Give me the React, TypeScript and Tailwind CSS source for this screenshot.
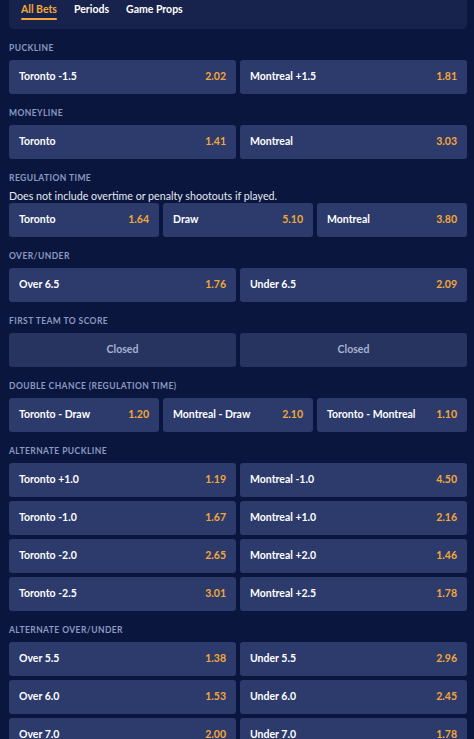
import React from 'react';

type Outcome = { name: string; odds?: string };

type Market = {
  title: string;
  note?: string;
  cols: 2 | 3;
  closed?: boolean;
  rows: Outcome[][];
};

const markets: Market[] = [
  { title: 'Puckline', cols: 2, rows: [[{ name: 'Toronto -1.5', odds: '2.02' }, { name: 'Montreal +1.5', odds: '1.81' }]] },
  { title: 'Moneyline', cols: 2, rows: [[{ name: 'Toronto', odds: '1.41' }, { name: 'Montreal', odds: '3.03' }]] },
  {
    title: 'Regulation Time',
    note: 'Does not include overtime or penalty shootouts if played.',
    cols: 3,
    rows: [[{ name: 'Toronto', odds: '1.64' }, { name: 'Draw', odds: '5.10' }, { name: 'Montreal', odds: '3.80' }]],
  },
  { title: 'Over/Under', cols: 2, rows: [[{ name: 'Over 6.5', odds: '1.76' }, { name: 'Under 6.5', odds: '2.09' }]] },
  { title: 'First Team To Score', cols: 2, closed: true, rows: [[{ name: 'Closed' }, { name: 'Closed' }]] },
  {
    title: 'Double Chance (Regulation Time)',
    cols: 3,
    rows: [[{ name: 'Toronto - Draw', odds: '1.20' }, { name: 'Montreal - Draw', odds: '2.10' }, { name: 'Toronto - Montreal', odds: '1.10' }]],
  },
  {
    title: 'Alternate Puckline',
    cols: 2,
    rows: [
      [{ name: 'Toronto +1.0', odds: '1.19' }, { name: 'Montreal -1.0', odds: '4.50' }],
      [{ name: 'Toronto -1.0', odds: '1.67' }, { name: 'Montreal +1.0', odds: '2.16' }],
      [{ name: 'Toronto -2.0', odds: '2.65' }, { name: 'Montreal +2.0', odds: '1.46' }],
      [{ name: 'Toronto -2.5', odds: '3.01' }, { name: 'Montreal +2.5', odds: '1.78' }],
    ],
  },
  {
    title: 'Alternate Over/Under',
    cols: 2,
    rows: [
      [{ name: 'Over 5.5', odds: '1.38' }, { name: 'Under 5.5', odds: '2.96' }],
      [{ name: 'Over 6.0', odds: '1.53' }, { name: 'Under 6.0', odds: '2.45' }],
      [{ name: 'Over 7.0', odds: '2.00' }, { name: 'Under 7.0', odds: '1.78' }],
    ],
  },
];

function OddsButton({ o, closed }: { o: Outcome; closed?: boolean }) {
  if (closed) {
    return (
      <div className="h-[34px] rounded-[3px] bg-[#26345f] flex items-center justify-center text-[10.5px] font-bold text-[#a7b2d2]">
        {o.name}
      </div>
    );
  }
  return (
    <button className="h-[34px] rounded-[3px] bg-[#2c3b6b] flex items-center justify-between px-[10px] text-[10.5px] font-bold">
      <span className="text-white">{o.name}</span>
      <span className="text-[#f4a738]">{o.odds}</span>
    </button>
  );
}

function MarketBlock({ m }: { m: Market }) {
  return (
    <section className="pt-[13px]">
      <h3 className="h-[12px] leading-[12px] mb-[6px] text-[8.5px] font-bold uppercase tracking-[0.05em] text-[#8a9ac3]">
        {m.title}
      </h3>
      {m.note && <p className="-mt-[1px] text-[10.7px] leading-[14px] text-[#e3e7f2]">{m.note}</p>}
      <div className="flex flex-col gap-[4px]">
        {m.rows.map((row, i) => (
          <div key={i} className={m.cols === 3 ? 'grid grid-cols-3 gap-[4px]' : 'grid grid-cols-2 gap-[4px]'}>
            {row.map((o, j) => (
              <OddsButton key={j} o={o} closed={m.closed} />
            ))}
          </div>
        ))}
      </div>
    </section>
  );
}

export default function App() {
  const tabs = ['All Bets', 'Periods', 'Game Props'];
  return (
    <div className="min-h-screen bg-[#0a163d] pl-[9px] pr-[7px] pb-6" style={{ fontFamily: 'Lato, "Open Sans", sans-serif' }}>
      <nav className="h-[29px] rounded-b-[5px] bg-[#18234d] flex items-start gap-[17px] pl-[12px] pt-[3px]">
        {tabs.map((t, i) => (
          <div key={t} className="flex flex-col items-stretch">
            <span className={i === 0 ? 'text-[10.5px] leading-[13px] font-bold text-[#f4a738]' : 'text-[10.5px] leading-[13px] font-bold text-white'}>
              {t}
            </span>
            {i === 0 && <span className="mt-[2px] h-[2px] rounded-full bg-[#f4a738]" />}
          </div>
        ))}
      </nav>
      <div>
        {markets.map((m) => (
          <MarketBlock key={m.title} m={m} />
        ))}
      </div>
    </div>
  );
}
